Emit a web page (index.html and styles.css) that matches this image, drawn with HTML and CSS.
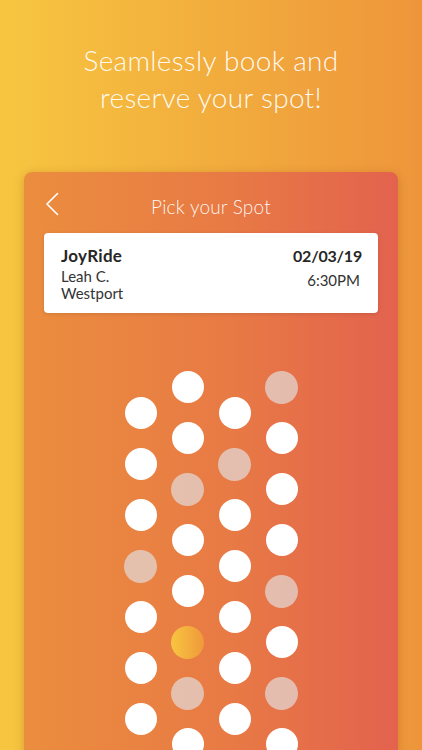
FILE: index.html
```html
<!DOCTYPE html>
<html lang="en">
<head>
    <meta charset="UTF-8">
    <meta name="viewport" content="width=device-width, initial-scale=1.0">
    <title>Pick your Spot</title>
    <link rel="stylesheet" href="styles.css">
</head>
<body>
    <h1 class="headline">Seamlessly book and<br>reserve your spot!</h1>

    <div class="card">
        <div class="card-header">
            <svg class="back" width="14" height="24" viewBox="0 0 14 24">
                <path d="M12.5 1.5 L2 12 L12.5 22.5" fill="none" stroke="#fff" stroke-width="1.6" stroke-linecap="round" stroke-linejoin="round"/>
            </svg>
            <span class="title">Pick your Spot</span>
        </div>

        <div class="ride">
            <div class="ride-info">
                <div class="ride-name">JoyRide</div>
                <div class="ride-line">Leah C.</div>
                <div class="ride-line">Westport</div>
            </div>
            <div class="ride-when">
                <div class="ride-date">02/03/19</div>
                <div class="ride-time">6:30PM</div>
            </div>
        </div>

        <div class="spots">
            <div class="spot-col low">
                <span class="spot"></span>
                <span class="spot"></span>
                <span class="spot"></span>
                <span class="spot taken"></span>
                <span class="spot"></span>
                <span class="spot"></span>
                <span class="spot"></span>
            </div>
            <div class="spot-col">
                <span class="spot"></span>
                <span class="spot"></span>
                <span class="spot taken"></span>
                <span class="spot"></span>
                <span class="spot"></span>
                <span class="spot picked"></span>
                <span class="spot taken"></span>
                <span class="spot"></span>
            </div>
            <div class="spot-col low">
                <span class="spot"></span>
                <span class="spot taken"></span>
                <span class="spot"></span>
                <span class="spot"></span>
                <span class="spot"></span>
                <span class="spot"></span>
                <span class="spot"></span>
            </div>
            <div class="spot-col">
                <span class="spot taken"></span>
                <span class="spot"></span>
                <span class="spot"></span>
                <span class="spot"></span>
                <span class="spot taken"></span>
                <span class="spot"></span>
                <span class="spot taken"></span>
                <span class="spot"></span>
            </div>
        </div>
    </div>
</body>
</html>
```

FILE: styles.css
```css
html, body {
    height: 100%;
}
body {
    margin: 0;
    overflow: hidden;
    font-family: Lato, "Open Sans", sans-serif;
    background: linear-gradient(90deg, #f7c640 0%, #f2ad3d 50%, #ee953b 100%);
}
.headline {
    margin: 42px 0 0;
    font-size: 28px;
    line-height: 37px;
    font-weight: 300;
    text-align: center;
    color: rgba(255, 255, 255, 0.95);
    letter-spacing: 0.3px;
}
.card {
    margin: 56px 24px 0;
    height: 640px;
    border-radius: 8px;
    background: linear-gradient(90deg, #eb8d3e 0%, #e87a45 55%, #e3624e 100%);
    box-shadow: 0 2px 10px rgba(120, 60, 0, 0.25);
}
.card-header {
    display: flex;
    align-items: center;
    justify-content: center;
    height: 48px;
    padding-top: 10px;
    position: relative;
}
.back {
    position: absolute;
    left: 21px;
    top: 20px;
}
.title {
    color: rgba(255, 255, 255, 0.95);
    font-size: 19px;
    font-weight: 300;
    letter-spacing: 0.2px;
}
.ride {
    display: flex;
    justify-content: space-between;
    margin: 3px 20px 0;
    height: 80px;
    box-sizing: border-box;
    padding: 11px 16px 0 17px;
    background: #fff;
    border-radius: 4px;
    box-shadow: 0 1px 4px rgba(0, 0, 0, 0.12);
    color: #262626;
}
.ride-name,
.ride-date {
    font-size: 17px;
    font-weight: 700;
    line-height: 24px;
    letter-spacing: 0.3px;
}
.ride-date {
    font-size: 16px;
    letter-spacing: -0.2px;
}
.ride-line,
.ride-time {
    font-size: 15px;
    line-height: 17px;
    color: #333;
}
.ride-when {
    text-align: right;
}
.ride-time {
    padding-top: 4px;
    padding-right: 2px;
}
.spots {
    display: flex;
    justify-content: center;
    gap: 15px;
    margin-top: 58px;
}
.spot-col {
    display: flex;
    flex-direction: column;
    gap: 19px;
}
.spot-col.low {
    padding-top: 26px;
}
.spot {
    display: block;
    width: 32px;
    height: 32px;
    border-radius: 50%;
    background: #fff;
}
.spot.taken {
    width: 33px;
    height: 33px;
    margin: -0.5px;
    background: rgba(226, 214, 210, 0.74);
}
.spot.picked {
    width: 33px;
    height: 33px;
    margin: -0.5px;
    background: linear-gradient(90deg, #f8c540, #ef993b);
}
```
